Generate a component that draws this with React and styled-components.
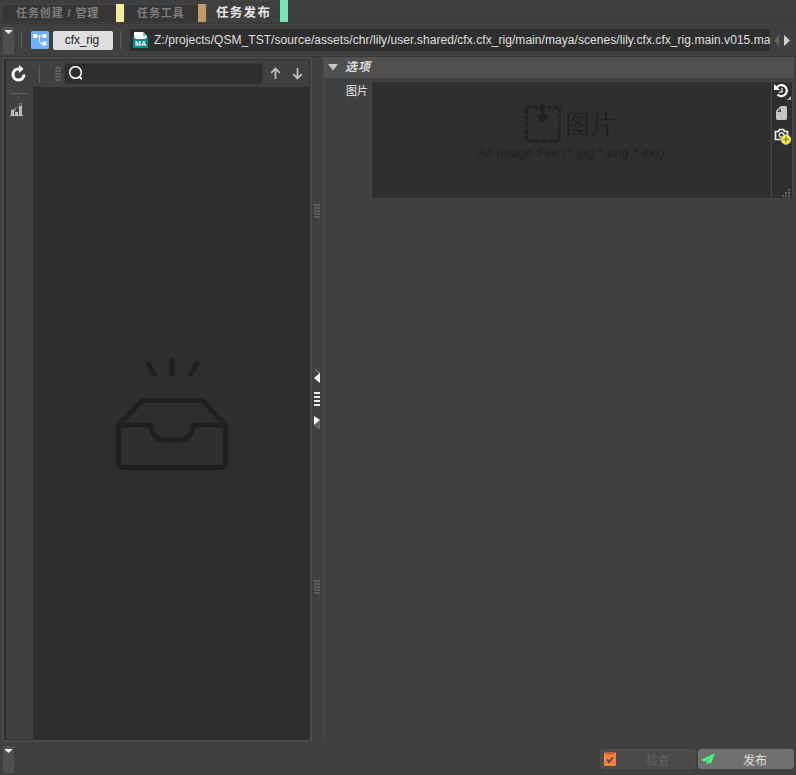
import React from "react";
import styled, { createGlobalStyle } from "styled-components";

const Global = createGlobalStyle`
  * { box-sizing: border-box; }
  html, body { margin: 0; background: #404040; overflow: hidden; }
  body { font-family: "Liberation Sans", "Noto Sans CJK SC", sans-serif; font-size: 12px; color: #dfdfdf; }
  svg { display: block; flex: none; }
`;

const Window = styled.div`
  width: 796px;
  height: 775px;
  display: flex;
  flex-direction: column;
  background: #404040;
  overflow: hidden;
  white-space: nowrap;
`;

const TabBar = styled.nav`
  height: 24px;
  flex: none;
  display: flex;
  align-items: flex-end;
  padding: 0 0 1px 1px;
  background: #3e3e3e;
  border-bottom: 1px solid #393939;
`;

const Tab = styled.div`
  width: ${(p) => p.$width}px;
  height: ${(p) => (p.$active ? 22 : 18)}px;
  display: flex;
  align-items: center;
  padding-left: ${(p) => p.$inset}px;
  padding-top: ${(p) => (p.$active ? 3 : 0)}px;
  background: ${(p) => (p.$active ? "#404040" : "#363636")};
  border-left: 1px solid #444;
  border-right: 8px solid ${(p) => p.$mark};
  color: ${(p) => (p.$active ? "#e6e6e6" : "#808080")};
  font-size: ${(p) => (p.$active ? 12.5 : 11)}px;
  letter-spacing: ${(p) => (p.$active ? 1.3 : 0.9)}px;
  font-weight: bold;
  line-height: 16px;
  box-shadow: inset 0 1px #444;
`;

const PathBar = styled.header`
  height: 32px;
  flex: none;
  display: flex;
  align-items: center;
  padding-left: 3px;
`;

const Handle = styled.div`
  width: 11px;
  height: 27px;
  padding: 3px 0 0 2px;
  background: #505050;
  margin-right: ${(p) => p.$gap || 0}px;
`;

const Rule = styled.span`
  width: 1px;
  height: 18px;
  background: #606060;
  margin: 0 ${(p) => p.$after}px 0 ${(p) => p.$before || 0}px;
`;

const Chip = styled.div`
  width: 60px;
  height: 19px;
  margin: 0 7px 0 4px;
  padding-right: 2px;
  border-radius: 2px;
  background: #dfdfdf;
  color: #202020;
  text-align: center;
  letter-spacing: -0.15px;
  line-height: 19px;
`;

const PathField = styled.div`
  width: 640px;
  height: 22px;
  display: flex;
  align-items: center;
  gap: 6px;
  padding-left: 3px;
  background: #2e2e2e;
  overflow: hidden;
`;

const PathText = styled.span`
  font-size: 12px;
  letter-spacing: 0.058px;
  line-height: 20px;
  color: #e0e0e0;
`;

const Pager = styled.div`
  display: flex;
  gap: 5px;
  padding-left: 4px;
`;

const Workspace = styled.main`
  height: 686px;
  flex: none;
  display: grid;
  grid-template-columns: 310px 11px 471px;
  padding-left: 2px;
  border-top: 1px solid #383838;
`;

const Browser = styled.section`
  border: 2px solid #4a4a4a;
  padding: 1px 0 0 2px;
  background: #2e2e2e;
  display: flex;
  flex-direction: column;
`;

const BrowserTools = styled.div`
  height: 27px;
  width: 303px;
  flex: none;
  display: flex;
  align-items: center;
  padding-left: 5px;
  background: #404040;
`;

const Search = styled.div`
  width: 199px;
  height: 22px;
  margin: 0 7px 0 3px;
  padding: 2px 3px 3px 4px;
  border: 1px solid #3a3a3a;
  border-radius: 2px;
  background: #2e2e2e;
`;

const BrowserBody = styled.div`
  display: flex;
  flex: 1;
  padding-bottom: 1px;
`;

const SideTools = styled.aside`
  width: 27px;
  background: #404040;
  display: flex;
  flex-direction: column;
  align-items: flex-start;
  padding: 6px 0 0 4px;
  gap: 9px;
`;

const SideRule = styled.span`
  width: 18px;
  height: 1px;
  background: #606060;
`;

const Empty = styled.div`
  flex: 1;
  display: flex;
  justify-content: center;
  padding-top: 271px;
`;

const Splitter = styled.div`
  display: flex;
  flex-direction: column;
  align-items: flex-start;
  padding: 147px 0 0 2px;
`;

const CollapseControl = styled.div`
  margin: 150px 0;
`;

const Options = styled.section`
  border-left: 1px solid #4c4c4c;
`;

const GroupTitle = styled.div`
  height: 21px;
  display: flex;
  align-items: center;
  gap: 7px;
  padding-left: 4px;
  background: #505050;
  font-size: 12px;
  letter-spacing: 1px;
  font-weight: bold;
  font-style: italic;
`;

const TitleText = styled.span`
  position: relative;
  line-height: 18px;
  margin-bottom: 2px;
`;

const Field = styled.div`
  display: flex;
  padding-top: 3px;
`;

const Label = styled.div`
  width: 47px;
  padding: 1px 3px 0 0;
  text-align: right;
  font-size: 11px;
  line-height: 19px;
  color: #f0f0f0;
`;

const ImageInput = styled.div`
  width: 422px;
  height: 118px;
  display: flex;
  border: 1px solid #484848;
  border-radius: 2px;
  background: #2e2e2e;
`;

const DropArea = styled.div`
  width: 399px;
  display: flex;
  flex-direction: column;
  align-items: center;
  padding-top: 21px;
  color: #202020;
`;

const DropTitle = styled.div`
  display: flex;
  align-items: center;
  gap: 3px;
  height: 40px;
  padding-right: 1px;
  font-family: "Noto Serif CJK SC", "Noto Sans CJK SC", serif;
  font-size: 26px;
  line-height: 38px;
`;

const DropHint = styled.div`
  font-size: 12px;
  font-style: italic;
  letter-spacing: 0.6px;
  line-height: 16px;
  padding-top: 2px;
`;

const ImageTools = styled.div`
  flex: 1;
  display: flex;
  flex-direction: column;
  padding: 1px 0 0 2px;
  border-left: 1px solid #484848;
  gap: 4px;
`;

const Resize = styled.div`
  margin: auto 2px 1px auto;
`;

const Footer = styled.footer`
  height: 33px;
  display: flex;
  align-items: flex-start;
  padding: 4px 2px 0 3px;
`;

const Actions = styled.div`
  display: flex;
  gap: 2px;
  margin: 3px 0 0 auto;
`;

const Action = styled.button`
  width: 96px;
  height: 20px;
  display: flex;
  align-items: center;
  gap: ${(p) => (p.$muted ? 29 : 27)}px;
  padding: 0 0 0 2px;
  border: 1px solid ${(p) => (p.$muted ? "#4d4d4d" : "#737373")};
  border-radius: 3px;
  background: ${(p) => (p.$muted ? "#4a4a4a" : "#707070")};
  color: ${(p) => (p.$muted ? "#626262" : "#e4e4e4")};
  font-family: "Noto Sans CJK SC", sans-serif;
  font-size: 12px;
  line-height: 18px;
`;

const ActionText = styled.span`
  padding-top: 1px;
`;

const Caret = () => (
  <svg width="7" height="4"><path d="M0 0h7v1L3.500 4 0 1z" fill="#f2f2f2" /></svg>
);

const Dots = () => (
  <svg width="6" height="14" shapeRendering="crispEdges">
    {[0, 3, 6, 9, 12].map((y) => (
      <g key={y}>
        <path d={`M0 ${y}h6v2h-6z`} fill="#565656" />
        <path d={`M1 ${y}h1v2h-1zM4 ${y}h1v2h-1z`} fill="#6a6a6a" />
      </g>
    ))}
  </svg>
);

const FlowIcon = () => (
  <svg width="18" height="18">
    <rect width="18" height="18" rx="1.5" fill="#70aeff" />
    <path d="M4 5h9M8.500 5v5q0 3 3.500 3" fill="none" stroke="#fff" />
    <rect x="2" y="3" width="4" height="4" rx="1" fill="#fff" />
    <rect x="11.500" y="3" width="4" height="4" rx="0.800" fill="#fff" />
    <rect x="11.500" y="10.500" width="4" height="4" rx="0.800" fill="#fff" />
  </svg>
);

const MayaIcon = () => (
  <svg width="15" height="16">
    <path d="M1 0h9l4 4v5H1z" fill="#fff" />
    <path d="M10 0v4h4z" fill="#74c8c4" />
    <path d="M0 5h1l2 2h9l2-2h1v11H0z" fill="#078c8b" />
    <text x="7.500" y="14" textAnchor="middle" fontFamily="Liberation Sans" fontSize="7" fontWeight="bold" fill="#fff">MA</text>
  </svg>
);

const RefreshIcon = () => (
  <svg width="15" height="17" fill="none">
    <path d="M9 4H7.500A5.500 5.500 0 1 0 13 9.500" stroke="#fff" strokeWidth="3" />
    <path d="M8 0v8l4.500-4z" fill="#fff" />
  </svg>
);

const SearchIcon = () => (
  <svg width="15" height="15" fill="none" stroke="#fff" strokeWidth="1.500">
    <circle cx="6.500" cy="6.500" r="5.800" />
    <path d="m10 10.500 2.800 2.500" strokeWidth="1.700" />
  </svg>
);

const ArrowIcon = ({ d, width = 22 }) => (
  <svg width={width} height="13" fill="none" stroke="#c0c0c0" strokeWidth="1.800"><path d={d} /></svg>
);

const BarsIcon = () => (
  <svg width="14" height="14" shapeRendering="crispEdges">
    <path d="M1 7h3v5h1V9h3v3h1V3h3v9h1v1H0v-1h1z" fill="#bdbdbd" />
    <path d="M1 7V6h3V5h1v4H4V7zM5 8V4h3v1H6v3zM9 3V0h3v3h-1V1h-1v2z" fill="#777" />
  </svg>
);

const InboxIcon = () => (
  <svg width="112" height="112" fill="none" stroke="#202020" strokeWidth="5">
    <path d="M2.500 67H35q1 15 14 15h14q13 0 14-15h32.500v38a4.500 4.500 0 0 1-4.500 4.500H7a4.500 4.500 0 0 1-4.500-4.500zM3.500 66 26 42.500h60.500L108.500 66" />
    <path d="M56 0v18M31.500 4l7.500 14M81.500 4l-7.500 14" />
  </svg>
);

const CollapseIcon = () => (
  <svg width="7" height="62">
    <path d="m0 0 6 4v5z" fill="#686868" />
    <path d="M6 5v10L0 10z" fill="#fff" />
    <path d="M0 24h6v2H0zM0 28h6v2H0zM0 32h6v2H0zM0 36h6v2H0z" fill="#eee" />
    <path d="M0 48v9l6-5z" fill="#fff" />
    <path d="M6 53v9l-6-4z" fill="#686868" />
  </svg>
);

const ImportIcon = () => (
  <svg width="36" height="38">
    <path d="M1.500 3.500h33v33h-33z" fill="none" stroke="#202020" strokeWidth="2.600" strokeDasharray="5 1.600" />
    <path d="M13 0h9v5h-9z" fill="#2e2e2e" />
    <path d="M15.500 0h4v11H24l-6.500 8-6-8h4z" fill="#202020" />
  </svg>
);

const HistoryIcon = () => (
  <svg width="18" height="18" fill="none">
    <path d="M2.500 5A5.500 5.500 0 1 1 3.500 11.500" stroke="#fff" strokeWidth="2.200" />
    <path d="M0 1v6h6z" fill="#fff" />
    <path d="M8 5v4H5" stroke="#d8d8d8" strokeWidth="1.400" />
    <path d="M17 13v4h-4z" fill="#b8b8b8" />
  </svg>
);

const FileIcon = () => (
  <svg width="16" height="18">
    <path d="M6.500 1H12l1 1v12l-1 1H3l-1-1V6z" fill="#c4c4c4" />
    <path d="M7 3v4H3z" fill="#484848" />
  </svg>
);

const CameraIcon = () => (
  <svg width="18" height="18" fill="none">
    <path d="M1.500 4.500h3l1-2h4l1 2h3v8h-12z" stroke="#f2f2f2" strokeWidth="1.700" />
    <circle cx="7.500" cy="8" r="2.300" stroke="#ddd" strokeWidth="1.500" />
    <circle cx="12" cy="12.500" r="4.900" fill="#fff629" stroke="#aaa" />
    <path d="M12 9.500v6M9 12.500h6" stroke="#8b8b55" strokeWidth="1.700" />
  </svg>
);

const CheckIcon = () => (
  <svg width="14" height="16">
    <rect x="1" y="1.500" width="12" height="13.500" rx="1" fill="#ff7f43" />
    <path d="M3 1h8v2.500H3z" fill="#c75d31" />
    <path d="m4 8.500 2 2.500 4-4.500" fill="none" stroke="#4a4a4a" strokeWidth="1.800" />
  </svg>
);

const SendIcon = () => (
  <svg width="15" height="14">
    <path d="M14 1 0 8l4 1.500zM14 1 5 9.500l5 2zM5.500 10v3l2-2z" fill="#43ff83" />
  </svg>
);

export default function App() {
  return (
    <Window>
      <Global />
      <TabBar>
        <Tab $width={123} $inset={14} $mark="#f0ec9b">任务创建 / 管理</Tab>
        <Tab $width={82} $inset={12} $mark="#c49a66">任务工具</Tab>
        <Tab $width={82} $inset={9} $mark="#78e5b5" $active>任务发布</Tab>
      </TabBar>
      <PathBar>
        <Handle $gap={7}><Caret /></Handle>
        <Rule $after={9} />
        <FlowIcon />
        <Chip>cfx_rig</Chip>
        <Rule $after={9} />
        <PathField>
          <MayaIcon />
          <PathText>Z:/projects/QSM_TST/source/assets/chr/lily/user.shared/cfx.cfx_rig/main/maya/scenes/lily.cfx.cfx_rig.main.v015.ma</PathText>
        </PathField>
        <Pager>
          <svg width="5" height="11"><path d="M5 0v11L0 5.500z" fill="#626262" /></svg>
          <svg width="6" height="11"><path d="M0 0v11l6-5.500z" fill="#d0d0d0" /></svg>
        </Pager>
      </PathBar>
      <Workspace>
        <Browser>
          <BrowserTools>
            <RefreshIcon />
            <Rule $before={13} $after={15} />
            <Dots />
            <Search><SearchIcon /></Search>
            <ArrowIcon d="M5.500 12V1.500M1.200 5.800 5.500 1.500l4.300 4.300" />
            <ArrowIcon d="M5.500 1v10.500M1.200 7.200l4.300 4.300 4.300-4.300" width={12} />
          </BrowserTools>
          <BrowserBody>
            <SideTools><SideRule /><BarsIcon /></SideTools>
            <Empty><InboxIcon /></Empty>
          </BrowserBody>
        </Browser>
        <Splitter>
          <Dots />
          <CollapseControl><CollapseIcon /></CollapseControl>
          <Dots />
        </Splitter>
        <Options>
          <GroupTitle>
            <svg width="10" height="7"><path d="M0 0h10L5 6.500z" fill="#c8c8c8" /></svg>
            <TitleText>选项</TitleText>
          </GroupTitle>
          <Field>
            <Label>图片</Label>
            <ImageInput>
              <DropArea>
                <DropTitle><ImportIcon />图片</DropTitle>
                <DropHint>All Image File (*.jpg *.png *.exr)</DropHint>
              </DropArea>
              <ImageTools>
                <HistoryIcon />
                <FileIcon />
                <CameraIcon />
                <Resize>
                  <svg width="8" height="8"><path d="M6 0h2v2H6zM3 3h2v2H3zM6 3h2v2H6zM0 6h2v2H0zM3 6h2v2H3zM6 6h2v2H6z" fill="#606060" /></svg>
                </Resize>
              </ImageTools>
            </ImageInput>
          </Field>
        </Options>
      </Workspace>
      <Footer>
        <Handle><Caret /></Handle>
        <Actions>
          <Action $muted><CheckIcon /><ActionText>检查</ActionText></Action>
          <Action><SendIcon /><ActionText>发布</ActionText></Action>
        </Actions>
      </Footer>
    </Window>
  );
}
